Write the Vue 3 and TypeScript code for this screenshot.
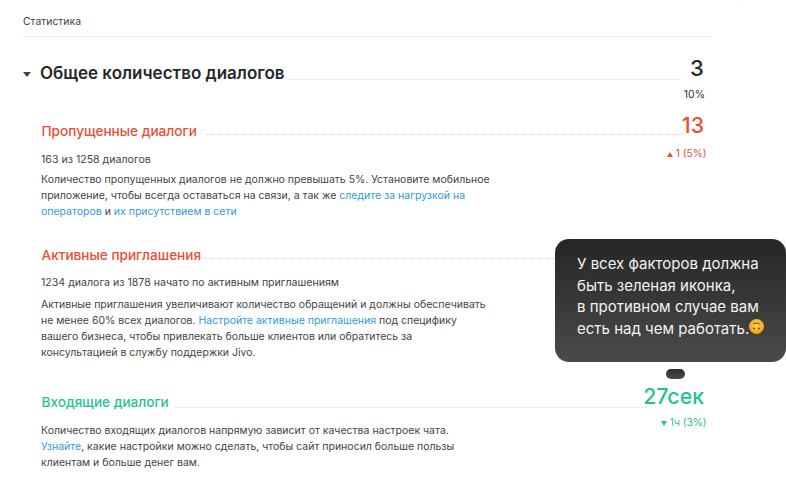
<script setup lang="ts">
// tooltip overlay text, line by line because the breaks are fixed in the design
const tipLines = ["У всех факторов должна", "быть зеленая иконка,", "в противном случае вам"];
</script>

<template>
  <div class="stats">
    <div class="stats__title">Статистика</div>

    <section class="total">
      <div class="row">
        <span class="total__arrow"></span>
        <h2 class="total__name">Общее количество диалогов</h2>
        <span class="row__dots row__dots--total"></span>
        <span class="total__value">3</span>
      </div>
      <div class="total__pct">10%</div>
    </section>

    <section class="factor factor--missed">
      <div class="row">
        <h3 class="factor__name factor__name--red">Пропущенные диалоги</h3>
        <span class="row__dots row__dots--missed"></span>
        <span class="factor__value factor__value--red">13</span>
      </div>
      <div class="factor__delta factor__delta--red">
        <svg width="6" height="5" viewBox="0 0 6 5"><path d="M3 0 6 5H0z" fill="#ee4c35" /></svg>
        1 (5%)
      </div>
      <p class="factor__sub factor__sub--tight">163 из 1258 диалогов</p>
      <p class="factor__text">
        Количество пропущенных диалогов не должно превышать 5%. Установите мобильное<br />
        приложение, чтобы всегда оставаться на связи, а так же
        <a href="#">следите за нагрузкой на<br />операторов</a> и
        <a href="#">их присутствием в сети</a>
      </p>
    </section>

    <section class="factor factor--active">
      <div class="row">
        <h3 class="factor__name factor__name--red">Активные приглашения</h3>
        <span class="row__dots row__dots--active"></span>
      </div>
      <p class="factor__sub">1234 диалога из 1878 начато по активным приглашениям</p>
      <p class="factor__text">
        Активные приглашения увеличивают количество обращений и должны обеспечивать<br />
        не менее 60% всех диалогов. <a href="#">Настройте активные приглашения</a> под специфику<br />
        вашего бизнеса, чтобы привлекать больше клиентов или обратитесь за<br />
        консультацией в службу поддержки Jivo.
      </p>
    </section>

    <section class="factor factor--incoming">
      <div class="row">
        <h3 class="factor__name factor__name--green">Входящие диалоги</h3>
        <span class="row__dots row__dots--incoming"></span>
        <span class="factor__value factor__value--green">27сек</span>
      </div>
      <div class="factor__delta factor__delta--green">
        <svg width="6" height="5" viewBox="0 0 6 5"><path d="M0 0h6L3 5z" fill="#1fc38f" /></svg>
        1ч (3%)
      </div>
      <p class="factor__text factor__text--tight">
        Количество входящих диалогов напрямую зависит от качества настроек чата.<br />
        <a href="#">Узнайте</a>, какие настройки можно сделать, чтобы сайт приносил больше пользы<br />
        клиентам и больше денег вам.
      </p>
    </section>

    <svg class="corner" width="12" height="9" viewBox="0 0 12 9">
      <path d="M1 0c3 1 6 3 8 7" fill="none" stroke="#e4e4e4" stroke-dasharray="1 3" />
    </svg>

    <div class="tip">
      <div v-for="line in tipLines" :key="line">{{ line }}</div>
      <div class="tip__last">
        есть над чем работать.<svg class="tip__emoji" width="15" height="15" viewBox="0 0 16 16">
          <defs>
            <radialGradient id="face" cx="50%" cy="40%" r="60%">
              <stop offset="0" stop-color="#ffd84f" />
              <stop offset="1" stop-color="#f59a12" />
            </radialGradient>
          </defs>
          <circle cx="8" cy="8" r="8" fill="url(#face)" />
          <path d="M4.6 5.8c.6-2 6.200-2 6.800 0" fill="none" stroke="#7a4510" stroke-width="1.1" />
          <circle cx="5.400" cy="10" r="1" fill="#6b3c0e" />
          <circle cx="10.600" cy="10" r="1" fill="#6b3c0e" />
        </svg>
      </div>
    </div>
    <div class="pill"></div>
  </div>
</template>

<style>
html,
body {
  background: #fff;
  overflow: hidden;
}
</style>

<style scoped>
.stats {
  position: relative;
  width: 786px;
  height: 495px;
  overflow: hidden;
  box-sizing: border-box;
  padding: 15px 75px 0 23px;
  font-family: Inter, "Noto Sans", sans-serif;
  color: #333;
}

.stats__title {
  font-size: 10.4px;
  line-height: 14px;
  padding-bottom: 7px;
  border-bottom: 1px solid #ececec;
  color: #444;
}

.row {
  display: flex;
  align-items: flex-end;
}

.row__dots {
  flex: 1;
  border-bottom: 1px dotted #d8d8d8;
  margin-bottom: 5px;
}

.row__dots--total {
  margin-left: 4px;
  margin-right: 8px;
}

.row__dots--missed {
  margin-left: 9px;
  margin-right: -2px;
}

.row__dots--active {
  margin-left: 2px;
  margin-right: 8px;
}

.row__dots--incoming {
  margin: 0 -3px 3px 6px;
}

/* ── Total ── */
.total {
  margin-top: 18px;
}

.total__arrow {
  width: 0;
  height: 0;
  margin: 0 9px 8px 0;
  border-left: 4px solid transparent;
  border-right: 4px solid transparent;
  border-top: 5px solid #444;
}

.total__name {
  margin: 0;
  font-size: 17px;
  line-height: 24px;
  font-weight: 600;
  color: #26292b;
}

.total__value {
  width: 21px;
  padding-bottom: 4px;
  font-size: 22px;
  line-height: 26px;
  font-weight: 500;
  color: #26292b;
}

.total__pct {
  margin-top: 3px;
  text-align: right;
  padding-right: 6px;
  font-size: 10.5px;
  line-height: 14px;
}

/* ── Factors ── */
.factor {
  padding-left: 18px;
}

.factor--missed {
  margin-top: 11px;
}

.factor--active {
  margin-top: 26px;
}

.factor--incoming {
  margin-top: 23px;
}

.factor__name {
  margin: 0 0 0 0.5px;
  font-size: 13.6px;
  line-height: 18px;
  font-weight: 500;
}

.factor__name--red {
  color: #ee4c35;
}

.factor__name--green {
  color: #1fc38f;
}

.factor__value {
  padding-bottom: 3px;
  font-size: 21.3px;
  line-height: 24px;
  font-weight: 500;
  margin-right: 7px;
}

.factor__value--red {
  color: #ee4c35;
}

.factor__value--green {
  color: #1fc38f;
}

.factor__delta {
  margin-top: 6px;
  text-align: right;
  padding-right: 4.5px;
  font-size: 10.2px;
  line-height: 14px;
}

.factor__delta--red {
  color: #ee4c35;
}

.factor__delta--green {
  margin-top: 4px;
  color: #1fc38f;
}

.factor__sub {
  margin: 11px 0 0;
  font-size: 10.6px;
  line-height: 16px;
  color: #444;
}

.factor__sub--tight {
  margin-top: -8px;
}

.factor__text {
  margin: 6px 0 0;
  font-size: 10.5px;
  line-height: 16px;
  color: #444;
}

.factor__sub--tight + .factor__text {
  margin-top: 4px;
}

.factor__text--tight {
  margin-top: -6px;
}

.factor__text a {
  color: #2d9ae0;
  text-decoration: none;
}

/* ── Overlay ── */
.corner {
  position: absolute;
  left: 736px;
  top: 0;
}

.tip {
  position: absolute;
  left: 555px;
  top: 239px;
  width: 231px;
  height: 123px;
  box-sizing: border-box;
  padding: 14px 0 0 22px;
  border-radius: 14px;
  background: linear-gradient(#262626, #4a4a4a);
  color: #f2f2f2;
  font-size: 15px;
  line-height: 21.5px;
  white-space: nowrap;
}

.tip__last {
  display: flex;
  align-items: center;
}

.tip__emoji {
  margin-top: -3px;
}

.pill {
  position: absolute;
  left: 666px;
  top: 369px;
  width: 19px;
  height: 10px;
  border-radius: 5px;
  background: linear-gradient(#2c2c2c, #4d4d4d);
}
</style>
